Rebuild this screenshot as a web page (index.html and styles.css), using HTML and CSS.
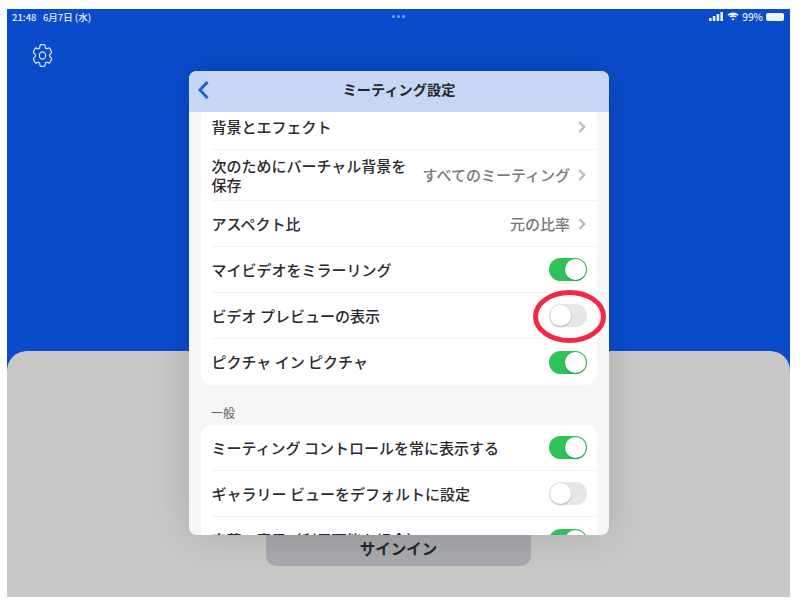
FILE: index.html
```html
<!DOCTYPE html>
<html lang="ja">

<head>
    <meta charset="UTF-8">
    <title>ミーティング設定</title>
    <link rel="stylesheet" href="styles.css">
</head>

<body>
    <div class="screen">
        <div class="top">
            <div class="status">
                <span class="status-time">21:48&nbsp;&nbsp; 6月7日 (水)</span>
                <span class="status-dots"><i></i><i></i><i></i></span>
                <span class="status-right">
                    <svg width="15" height="9" viewBox="0 0 15 9"><rect x="0" y="6" width="2.6" height="3" rx=".5"/><rect x="3.8" y="4" width="2.6" height="5" rx=".5"/><rect x="7.6" y="2" width="2.6" height="7" rx=".5"/><rect x="11.4" y="0" width="2.6" height="9" rx=".5"/></svg>
                    <svg width="12" height="9" viewBox="0 0 12 9" fill="none" stroke="#eef2fb" stroke-width="1.3"><path d="M.8 3.2a7.6 7.6 0 0 1 10.4 0"/><path d="M2.7 5.1a4.8 4.8 0 0 1 6.6 0"/><path d="M6 8.4 4.5 6.9a2.2 2.2 0 0 1 3 0Z" fill="#eef2fb" stroke="none"/></svg>
                    <span class="status-pct">99%</span>
                    <span class="battery"></span>
                </span>
            </div>
            <svg class="gear" width="21" height="23" viewBox="2 2.5 20 19" preserveAspectRatio="none" fill="none" stroke="#dde6f8" stroke-width="1.1">
                <path d="M9.594 3.94c.09-.542.56-.94 1.11-.94h2.593c.55 0 1.02.398 1.11.94l.213 1.281c.063.374.313.686.645.87.074.04.147.083.22.127.325.196.72.257 1.075.124l1.217-.456a1.125 1.125 0 0 1 1.37.49l1.296 2.247a1.125 1.125 0 0 1-.26 1.431l-1.003.827c-.293.241-.438.613-.43.992a7.723 7.723 0 0 1 0 .255c-.008.378.137.75.43.991l1.004.827c.424.35.534.955.26 1.43l-1.298 2.247a1.125 1.125 0 0 1-1.369.491l-1.217-.456c-.355-.133-.75-.072-1.076.124a6.47 6.47 0 0 1-.22.128c-.331.183-.581.495-.644.869l-.213 1.281c-.09.543-.56.94-1.11.94h-2.594c-.55 0-1.019-.398-1.11-.94l-.213-1.281c-.062-.374-.312-.686-.644-.87a6.52 6.52 0 0 1-.22-.127c-.325-.196-.72-.257-1.076-.124l-1.217.456a1.125 1.125 0 0 1-1.369-.49l-1.297-2.247a1.125 1.125 0 0 1 .26-1.431l1.004-.827c.292-.24.437-.613.43-.991a6.932 6.932 0 0 1 0-.255c.007-.38-.138-.751-.43-.992l-1.004-.827a1.125 1.125 0 0 1-.26-1.43l1.297-2.247a1.125 1.125 0 0 1 1.37-.491l1.216.456c.356.133.751.072 1.076-.124.072-.044.146-.086.22-.128.332-.183.582-.495.644-.869l.214-1.28Z"/>
                <circle cx="12" cy="12" r="3"/>
            </svg>
        </div>

        <div class="bottom">
            <div class="signin">サインイン</div>
        </div>

        <div class="modal">
            <div class="modal-head">
                <svg class="back" width="13" height="20" viewBox="0 0 13 20" fill="none" stroke="#1f62d0" stroke-width="3"><path d="M10.5 2 3 10l7.5 8"/></svg>
                <h1>ミーティング設定</h1>
            </div>
            <div class="modal-body">
                <div class="card card-first">
                    <div class="row">
                        <span class="label">背景とエフェクト</span>
                        <span class="chev"></span>
                    </div>
                    <div class="row row-tall">
                        <span class="label label-wrap">次のためにバーチャル背景を保存</span>
                        <span class="value">すべてのミーティング</span>
                        <span class="chev"></span>
                    </div>
                    <div class="row">
                        <span class="label">アスペクト比</span>
                        <span class="value">元の比率</span>
                        <span class="chev"></span>
                    </div>
                    <div class="row">
                        <span class="label">マイビデオをミラーリング</span>
                        <span class="toggle on"></span>
                    </div>
                    <div class="row row-marked">
                        <span class="label">ビデオ プレビューの表示</span>
                        <span class="toggle"></span>
                        <svg class="mark" width="73" height="53" viewBox="0 0 73 53" fill="none" stroke="#f02a44" stroke-width="5"><ellipse cx="36.5" cy="26.5" rx="34" ry="24"/></svg>
                    </div>
                    <div class="row">
                        <span class="label">ピクチャ イン ピクチャ</span>
                        <span class="toggle on"></span>
                    </div>
                </div>
                <div class="section-title">一般</div>
                <div class="card">
                    <div class="row">
                        <span class="label">ミーティング コントロールを常に表示する</span>
                        <span class="toggle on"></span>
                    </div>
                    <div class="row">
                        <span class="label">ギャラリー ビューをデフォルトに設定</span>
                        <span class="toggle"></span>
                    </div>
                    <div class="row">
                        <span class="label">字幕の表示（利用可能な場合）</span>
                        <span class="toggle on"></span>
                    </div>
                </div>
            </div>
        </div>
    </div>
</body>

</html>
```

FILE: styles.css
```css
* {
    box-sizing: border-box;
}

body {
    margin: 0;
    background-color: #fff;
    font-family: "Noto Sans CJK JP", "Liberation Sans", sans-serif;
}

.screen {
    position: relative;
    display: flex;
    flex-direction: column;
    width: 783px;
    height: 588px;
    margin: 9px 0 0 7px;
    overflow: hidden;
    background-color: #0a4bcb;
}

.top {
    height: 342px;
    padding: 0 5px;
}

.status {
    display: grid;
    grid-template-columns: 1fr auto 1fr;
    align-items: center;
    height: 15px;
    font-size: 9.5px;
    font-weight: 500;
    color: #e6ecfa;
}

.status-dots {
    display: flex;
    gap: 2px;
    margin-left: -1px;
}

.status-dots i {
    width: 3px;
    height: 3px;
    border-radius: 50%;
    background-color: #7f9fe4;
}

.status-right {
    display: flex;
    align-items: center;
    justify-content: flex-end;
    gap: 3px;
}

.status-right svg {
    fill: #eef2fb;
}

.status-pct {
    font-size: 10px;
}

.battery {
    width: 18px;
    height: 8px;
    margin-right: 1px;
    border-radius: 2px;
    background-color: #eef2fb;
}

.gear {
    display: block;
    margin: 20px 0 0 20px;
}

.bottom {
    display: flex;
    flex: 1;
    flex-direction: column;
    align-items: center;
    justify-content: flex-end;
    padding-bottom: 31px;
    border-radius: 20px 20px 0 0;
    background-color: #c8c8c6;
}

.signin {
    width: 265px;
    height: 46px;
    padding-top: 16px;
    border-radius: 10px;
    background-color: #a8a9ad;
    color: #26262a;
    font-size: 15.5px;
    font-weight: 700;
    line-height: 24px;
    text-align: center;
}

.modal {
    position: absolute;
    top: 62px;
    left: 182px;
    display: flex;
    flex-direction: column;
    width: 420px;
    height: 464px;
    overflow: hidden;
    border-radius: 8px;
    background-color: #f6f6f7;
    box-shadow: 0 0 40px rgba(0, 0, 0, .14);
}

.modal-head {
    position: relative;
    flex: none;
    height: 41px;
    background-color: #c6d6f4;
}

.modal-head h1 {
    margin: 0;
    color: #26262a;
    font-size: 14.2px;
    font-weight: 700;
    line-height: 36px;
    text-align: center;
}

.back {
    position: absolute;
    top: 9px;
    left: 8px;
}

.modal-body {
    flex: 1;
    padding: 0 12px;
    overflow: hidden;
}

.card {
    border-radius: 10px;
    background-color: #fff;
}

.card-first {
    margin-top: -8px;
}

.row {
    display: flex;
    align-items: center;
    height: 46px;
    margin-left: 11px;
    padding-right: 10px;
    border-bottom: 1px solid #f3f3f4;
    color: #2a2a2e;
    font-size: 15px;
    font-weight: 500;
}

.row:last-child {
    border-bottom: 0;
}

.row-tall {
    height: 51px;
}

.row-marked {
    position: relative;
}

.label {
    flex: 1;
    margin-top: -1px;
    margin-left: -.5px;
    white-space: nowrap;
}

.label-wrap {
    flex: none;
    width: 198px;
    margin-right: auto;
    line-height: 19px;
    white-space: normal;
}

.value {
    margin-top: -1px;
    color: #78787e;
    font-size: 15px;
}

.chev {
    width: 8px;
    height: 8px;
    margin: 0 3px 0 6px;
    border-top: 2px solid #b9b9bc;
    border-right: 2px solid #b9b9bc;
    transform: rotate(45deg);
}

.toggle {
    position: relative;
    width: 38px;
    height: 23px;
    border-radius: 12px;
    background-color: #e6e6e8;
}

.toggle::after {
    content: "";
    position: absolute;
    top: 1px;
    left: 1px;
    width: 21px;
    height: 21px;
    border-radius: 50%;
    background-color: #fff;
    box-shadow: 0 1px 2px rgba(0, 0, 0, .25);
}

.toggle.on {
    background-color: #30c259;
}

.toggle.on::after {
    left: 16px;
}

.mark {
    position: absolute;
    top: -3px;
    right: -9px;
}

.section-title {
    height: 40px;
    padding: 20px 0 0 10px;
    color: #5f5f64;
    font-size: 12px;
    line-height: 16px;
}
```
